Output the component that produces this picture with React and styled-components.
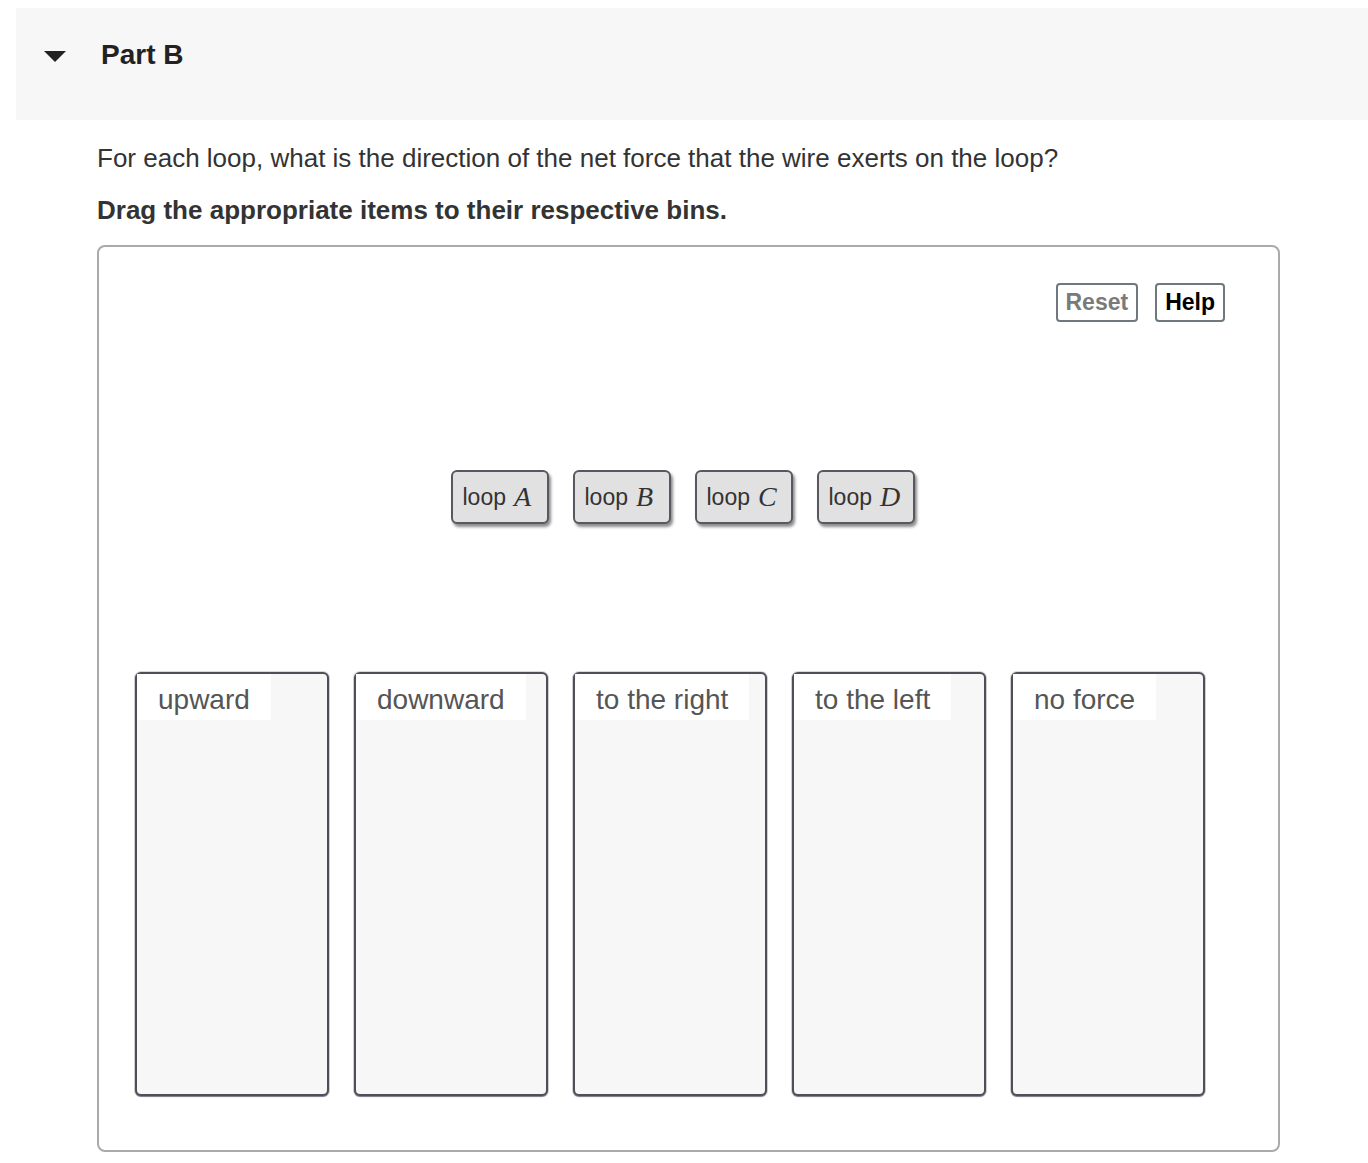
import React from 'react';
import styled, {createGlobalStyle} from 'styled-components';

const GlobalStyle = createGlobalStyle`
  body {
    margin: 0;
    background: #fff;
    font-family: "Liberation Sans", Arial, Helvetica, sans-serif;
    color: #333;
  }
`;

const Page = styled.div`
  padding-top: 8px;
  width: 1368px;
`;

//Collapsible part header
const PartHeader = styled.div`
  margin-left: 16px;
  height: 112px;
  box-sizing: border-box;
  background: #f7f7f7;
  display: flex;
  align-items: center;
  padding: 0 0 18px 28px;
  gap: 35px;
`;

const Caret = styled.span`
  width: 0;
  height: 0;
  border-left: 11px solid transparent;
  border-right: 11px solid transparent;
  border-top: 11px solid #222;
  margin-top: 2px;
`;

const PartTitle = styled.h2`
  margin: 0;
  font-size: 28px;
  font-weight: bold;
  color: #222;
`;

const Body = styled.div`
  margin-left: 97px;
  width: 1183px;
`;

const Question = styled.p`
  margin: 23px 0 0;
  font-size: 26px;
  line-height: 30px;
  color: #333;
`;

const Instruction = styled(Question)`
  margin-top: 22px;
  font-weight: bold;
`;

//Drag and drop area
const Board = styled.div`
  margin-top: 20px;
  height: 907px;
  box-sizing: border-box;
  border: 2px solid #aaa;
  border-radius: 8px;
  display: flex;
  flex-direction: column;
`;

const Toolbar = styled.div`
  display: flex;
  justify-content: flex-end;
  gap: 17px;
  padding: 36px 53px 0 0;
`;

const ToolButton = styled.button`
  font-family: inherit;
  font-size: 23px;
  font-weight: bold;
  height: 39px;
  padding: 0 8px;
  background: #fff;
  border: 2px solid #6f787d;
  border-radius: 4px;
  color: ${({muted}) => (muted ? '#7a7a7a' : '#000')};
  cursor: pointer;
`;

const ItemRow = styled.div`
  display: flex;
  justify-content: center;
  gap: 24px;
  margin-top: 148px;
  padding-right: 12px;
`;

const Item = styled.div`
  width: 98px;
  height: 54px;
  box-sizing: border-box;
  padding-left: 10px;
  background: #e1e1e1;
  border: 2px solid #585860;
  border-radius: 6px;
  box-shadow: 2px 3px 3px rgba(0, 0, 0, 0.45);
  display: flex;
  align-items: center;
  gap: 8px;
  font-size: 23px;
  color: #333;
  cursor: grab;
`;

const MathVar = styled.span`
  font-family: "Liberation Serif", "DejaVu Serif", serif;
  font-style: italic;
  font-size: 28px;
  color: #333;
`;

const BinRow = styled.div`
  display: flex;
  gap: 25px;
  margin-top: 148px;
  padding-left: 36px;
`;

const Bin = styled.div`
  width: 194px;
  height: 424px;
  box-sizing: border-box;
  background: #f7f7f7;
  border: 2px solid #4f4f58;
  border-radius: 6px;
  box-shadow: 0 1px 1px rgba(60, 60, 80, 0.6), 0 0 0 1px rgba(140, 140, 155, 0.35);
`;

const BinLabel = styled.div`
  display: inline-block;
  background: #fff;
  height: 46px;
  line-height: 52px;
  padding: 0 21px;
  font-size: 28px;
  color: #555;
`;

const loops = ['A', 'B', 'C', 'D'];
const bins = ['upward', 'downward', 'to the right', 'to the left', 'no force'];

const App = () => (
  <Page>
    <GlobalStyle />
    <PartHeader>
      <Caret />
      <PartTitle>Part B</PartTitle>
    </PartHeader>
    <Body>
      <Question>
        For each loop, what is the direction of the net force that the wire
        exerts on the loop?
      </Question>
      <Instruction>Drag the appropriate items to their respective bins.</Instruction>
      <Board>
        <Toolbar>
          <ToolButton muted>Reset</ToolButton>
          <ToolButton>Help</ToolButton>
        </Toolbar>
        <ItemRow>
          {loops.map((l) => (
            <Item key={l}>
              loop <MathVar>{l}</MathVar>
            </Item>
          ))}
        </ItemRow>
        <BinRow>
          {bins.map((b) => (
            <Bin key={b}>
              <BinLabel>{b}</BinLabel>
            </Bin>
          ))}
        </BinRow>
      </Board>
    </Body>
  </Page>
);

export default App;
